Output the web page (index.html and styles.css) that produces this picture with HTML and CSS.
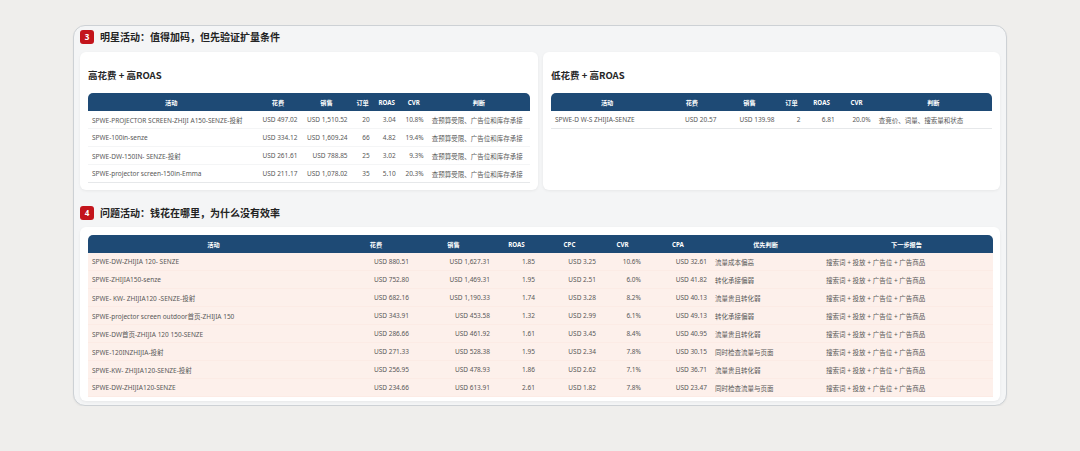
FILE: index.html
```html
<!DOCTYPE html>
<html lang="zh-CN">
<head>
<meta charset="utf-8">
<title>活动分析</title>
<link rel="stylesheet" href="styles.css">
</head>
<body>
<div class="panel">
  <div class="sec-head">
    <span class="badge">3</span>
    <h2 class="sec-title">明星活动：值得加码，但先验证扩量条件</h2>
  </div>
  <div class="cards">
    <div class="card">
      <h3 class="card-title">高花费 + 高ROAS</h3>
      <table class="tbl t1">
        <colgroup>
          <col class="c1-name"><col class="c1-spend"><col class="c1-sales"><col class="c1-ord"><col class="c1-roas"><col class="c1-cvr"><col class="c1-judge">
        </colgroup>
        <thead>
          <tr><th>活动</th><th>花费</th><th>销售</th><th>订单</th><th>ROAS</th><th>CVR</th><th>判断</th></tr>
        </thead>
        <tbody>
          <tr><td>SPWE-PROJECTOR SCREEN-ZHIJI A150-SENZE-投射</td><td class="num">USD 497.02</td><td class="num">USD 1,510.52</td><td class="num">20</td><td class="num">3.04</td><td class="num">10.8%</td><td>查预算受限、广告位和库存承接</td></tr>
          <tr><td>SPWE-100in-senze</td><td class="num">USD 334.12</td><td class="num">USD 1,609.24</td><td class="num">66</td><td class="num">4.82</td><td class="num">19.4%</td><td>查预算受限、广告位和库存承接</td></tr>
          <tr><td>SPWE-DW-150IN- SENZE-投射</td><td class="num">USD 261.61</td><td class="num">USD 788.85</td><td class="num">25</td><td class="num">3.02</td><td class="num">9.3%</td><td>查预算受限、广告位和库存承接</td></tr>
          <tr><td>SPWE-projector screen-150in-Emma</td><td class="num">USD 211.17</td><td class="num">USD 1,078.02</td><td class="num">35</td><td class="num">5.10</td><td class="num">20.3%</td><td>查预算受限、广告位和库存承接</td></tr>
        </tbody>
      </table>
    </div>
    <div class="card">
      <h3 class="card-title">低花费 + 高ROAS</h3>
      <table class="tbl t1">
        <colgroup>
          <col class="c2-name"><col class="c2-spend"><col class="c2-sales"><col class="c2-ord"><col class="c2-roas"><col class="c2-cvr"><col class="c2-judge">
        </colgroup>
        <thead>
          <tr><th>活动</th><th>花费</th><th>销售</th><th>订单</th><th>ROAS</th><th>CVR</th><th>判断</th></tr>
        </thead>
        <tbody>
          <tr><td>SPWE-D W-S ZHIJIA-SENZE</td><td class="num">USD 20.57</td><td class="num">USD 139.98</td><td class="num">2</td><td class="num">6.81</td><td class="num">20.0%</td><td>查竞价、词量、搜索量和状态</td></tr>
        </tbody>
      </table>
    </div>
  </div>

  <div class="sec-head sec-4">
    <span class="badge">4</span>
    <h2 class="sec-title">问题活动：钱花在哪里，为什么没有效率</h2>
  </div>
  <div class="card card-wide">
    <table class="tbl t4">
      <colgroup>
        <col class="c4-name"><col class="c4-spend"><col class="c4-sales"><col class="c4-roas"><col class="c4-cpc"><col class="c4-cvr"><col class="c4-cpa"><col class="c4-pri"><col class="c4-next">
      </colgroup>
      <thead>
        <tr><th>活动</th><th>花费</th><th>销售</th><th>ROAS</th><th>CPC</th><th>CVR</th><th>CPA</th><th>优先判断</th><th>下一步报告</th></tr>
      </thead>
      <tbody>
        <tr><td>SPWE-DW-ZHIJIA 120- SENZE</td><td class="num">USD 880.51</td><td class="num">USD 1,627.31</td><td class="num">1.85</td><td class="num">USD 3.25</td><td class="num">10.6%</td><td class="num">USD 32.61</td><td>流量成本偏高</td><td class="next">搜索词 + 投放 + 广告位 + 广告商品</td></tr>
        <tr><td>SPWE-ZHIJIA150-senze</td><td class="num">USD 752.80</td><td class="num">USD 1,469.31</td><td class="num">1.95</td><td class="num">USD 2.51</td><td class="num">6.0%</td><td class="num">USD 41.82</td><td>转化承接偏弱</td><td class="next">搜索词 + 投放 + 广告位 + 广告商品</td></tr>
        <tr><td>SPWE- KW- ZHIJIA120 -SENZE-投射</td><td class="num">USD 682.16</td><td class="num">USD 1,190.33</td><td class="num">1.74</td><td class="num">USD 3.28</td><td class="num">8.2%</td><td class="num">USD 40.13</td><td>流量贵且转化弱</td><td class="next">搜索词 + 投放 + 广告位 + 广告商品</td></tr>
        <tr><td>SPWE-projector screen outdoor首页-ZHIJIA 150</td><td class="num">USD 343.91</td><td class="num">USD 453.58</td><td class="num">1.32</td><td class="num">USD 2.99</td><td class="num">6.1%</td><td class="num">USD 49.13</td><td>转化承接偏弱</td><td class="next">搜索词 + 投放 + 广告位 + 广告商品</td></tr>
        <tr><td>SPWE-DW首页-ZHIJIA 120 150-SENZE</td><td class="num">USD 286.66</td><td class="num">USD 461.92</td><td class="num">1.61</td><td class="num">USD 3.45</td><td class="num">8.4%</td><td class="num">USD 40.95</td><td>流量贵且转化弱</td><td class="next">搜索词 + 投放 + 广告位 + 广告商品</td></tr>
        <tr><td>SPWE-120INZHIJIA-投射</td><td class="num">USD 271.33</td><td class="num">USD 528.38</td><td class="num">1.95</td><td class="num">USD 2.34</td><td class="num">7.8%</td><td class="num">USD 30.15</td><td>同时检查流量与页面</td><td class="next">搜索词 + 投放 + 广告位 + 广告商品</td></tr>
        <tr><td>SPWE-KW- ZHIJIA120-SENZE-投射</td><td class="num">USD 256.95</td><td class="num">USD 478.93</td><td class="num">1.86</td><td class="num">USD 2.62</td><td class="num">7.1%</td><td class="num">USD 36.71</td><td>流量贵且转化弱</td><td class="next">搜索词 + 投放 + 广告位 + 广告商品</td></tr>
        <tr><td>SPWE-DW-ZHIJIA120-SENZE</td><td class="num">USD 234.66</td><td class="num">USD 613.91</td><td class="num">2.61</td><td class="num">USD 1.82</td><td class="num">7.8%</td><td class="num">USD 23.47</td><td>同时检查流量与页面</td><td class="next">搜索词 + 投放 + 广告位 + 广告商品</td></tr>
      </tbody>
    </table>
  </div>
</div>
</body>
</html>
```

FILE: styles.css
```css
* { box-sizing: border-box; }

body {
  margin: 0;
  background: #efeeec;
  font-family: "Noto Sans", "Noto Sans CJK SC", sans-serif;
  color: #222;
}

.panel {
  margin: 25px 0 0 73px;
  width: 934px;
  height: 381px;
  background: #f4f5f6;
  border: 1px solid #cdd1d5;
  border-radius: 12px;
  padding: 4px 6px 4px 6px;
  box-shadow: 0 1px 2px rgba(0,0,0,0.05);
}

.sec-head {
  display: flex;
  align-items: center;
  gap: 6px;
  height: 14px;
  margin-bottom: 8px;
}

.sec-4 {
  margin-top: 16px;
  margin-bottom: 7px;
}

.badge {
  width: 14px;
  height: 14px;
  border-radius: 3px;
  background: #c3151c;
  color: #fff;
  font-size: 8px;
  font-weight: 700;
  display: flex;
  align-items: center;
  justify-content: center;
  line-height: 1;
}

.sec-title {
  margin: 0;
  font-family: "Noto Sans CJK SC", "Noto Sans", sans-serif;
  font-size: 10px;
  font-weight: 700;
  line-height: 14px;
  color: #222;
}

.cards {
  display: grid;
  grid-template-columns: 458px 457px;
  gap: 5px;
}

.card {
  background: #fff;
  border-radius: 6px;
  padding: 16px 8px 7px 8px;
  box-shadow: 0 1px 3px rgba(0,0,0,0.06);
}

.card-title {
  margin: 0 0 11px 0;
  font-family: "Noto Sans CJK SC", "Noto Sans", sans-serif;
  font-size: 9.5px;
  font-weight: 700;
  line-height: 14px;
  color: #262626;
}

.card-wide {
  padding: 8px 7px 4px 8px;
}

.tbl {
  width: 100%;
  table-layout: fixed;
  border-collapse: separate;
  border-spacing: 0;
  font-size: 6.5px;
  color: #585858;
}

.tbl th {
  background: #1e4a75;
  color: #fff;
  font-weight: 700;
  font-size: 6.2px;
  height: 18px;
  padding: 0 4px;
  text-align: center;
  white-space: nowrap;
}

.tbl th:first-child { border-top-left-radius: 5px; }
.tbl th:last-child { border-top-right-radius: 5px; }

.tbl td {
  height: 18px;
  padding: 0 4px;
  white-space: nowrap;
  overflow: hidden;
  text-align: left;
  font-family: "Noto Sans", "Noto Sans CJK SC", sans-serif;
}

.tbl td.num { text-align: right; }

.t1 td { border-bottom: 1px solid #f4f5f6; }
.t1 tr:last-child td { border-bottom-color: #e6e8ea; }

.t4 td {
  background: #fdf0eb;
  border-bottom: 1px solid #fcebe5;
}

.t4 td.next { padding-left: 6px; }

/* table 1 columns */
.c1-name { width: 166px; }
.c1-spend { width: 47px; }
.c1-sales { width: 50px; }
.c1-ord { width: 22px; }
.c1-roas { width: 26px; }
.c1-cvr { width: 28px; }
.c1-judge { width: 102px; }

/* table 2 columns */
.c2-name { width: 112px; }
.c2-spend { width: 57px; }
.c2-sales { width: 58px; }
.c2-ord { width: 26px; }
.c2-roas { width: 34px; }
.c2-cvr { width: 36px; }
.c2-judge { width: 117px; }

/* table 4 columns */
.c4-name { width: 251px; }
.c4-spend { width: 74px; }
.c4-sales { width: 81px; }
.c4-roas { width: 45px; }
.c4-cpc { width: 61px; }
.c4-cvr { width: 45px; }
.c4-cpa { width: 66px; }
.c4-pri { width: 109px; }
.c4-next { width: 173px; }
```
